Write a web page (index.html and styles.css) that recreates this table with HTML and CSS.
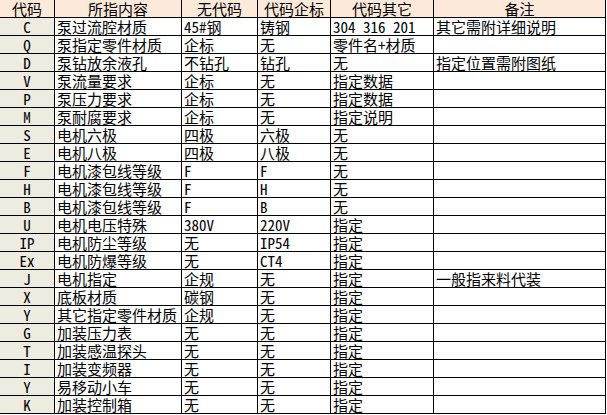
FILE: index.html
```html
<!DOCTYPE html>
<html lang="zh-CN">
<head>
<meta charset="utf-8">
<title>代码表</title>
<link rel="stylesheet" href="styles.css">
</head>
<body>
<table class="sheet">
<colgroup>
<col class="c-code"><col class="c-item"><col class="c-none"><col class="c-std"><col class="c-other"><col class="c-note">
</colgroup>
<thead>
<tr><th>代码</th><th>所指内容</th><th>无代码</th><th>代码企标</th><th>代码其它</th><th>备注</th></tr>
</thead>
<tbody>
<tr><td class="code">C</td><td>泵过流腔材质</td><td>45#钢</td><td>铸钢</td><td>304 316 201</td><td>其它需附详细说明</td></tr>
<tr><td class="code">Q</td><td>泵指定零件材质</td><td>企标</td><td>无</td><td>零件名+材质</td><td></td></tr>
<tr><td class="code">D</td><td>泵钻放余液孔</td><td>不钻孔</td><td>钻孔</td><td>无</td><td>指定位置需附图纸</td></tr>
<tr><td class="code">V</td><td>泵流量要求</td><td>企标</td><td>无</td><td>指定数据</td><td></td></tr>
<tr><td class="code">P</td><td>泵压力要求</td><td>企标</td><td>无</td><td>指定数据</td><td></td></tr>
<tr><td class="code">M</td><td>泵耐腐要求</td><td>企标</td><td>无</td><td>指定说明</td><td></td></tr>
<tr><td class="code">S</td><td>电机六极</td><td>四极</td><td>六极</td><td>无</td><td></td></tr>
<tr><td class="code">E</td><td>电机八极</td><td>四极</td><td>八极</td><td>无</td><td></td></tr>
<tr><td class="code">F</td><td>电机漆包线等级</td><td>F</td><td>F</td><td>无</td><td></td></tr>
<tr><td class="code">H</td><td>电机漆包线等级</td><td>F</td><td>H</td><td>无</td><td></td></tr>
<tr><td class="code">B</td><td>电机漆包线等级</td><td>F</td><td>B</td><td>无</td><td></td></tr>
<tr><td class="code">U</td><td>电机电压特殊</td><td>380V</td><td>220V</td><td>指定</td><td></td></tr>
<tr><td class="code">IP</td><td>电机防尘等级</td><td>无</td><td>IP54</td><td>指定</td><td></td></tr>
<tr><td class="code">Ex</td><td>电机防爆等级</td><td>无</td><td>CT4</td><td>指定</td><td></td></tr>
<tr><td class="code">J</td><td>电机指定</td><td>企规</td><td>无</td><td>指定</td><td>一般指来料代装</td></tr>
<tr><td class="code">X</td><td>底板材质</td><td>碳钢</td><td>无</td><td>指定</td><td></td></tr>
<tr><td class="code">Y</td><td>其它指定零件材质</td><td>企规</td><td>无</td><td>指定</td><td></td></tr>
<tr><td class="code">G</td><td>加装压力表</td><td>无</td><td>无</td><td>指定</td><td></td></tr>
<tr><td class="code">T</td><td>加装感温探头</td><td>无</td><td>无</td><td>指定</td><td></td></tr>
<tr><td class="code">I</td><td>加装变频器</td><td>无</td><td>无</td><td>指定</td><td></td></tr>
<tr><td class="code">Y</td><td>易移动小车</td><td>无</td><td>无</td><td>指定</td><td></td></tr>
<tr><td class="code">K</td><td>加装控制箱</td><td>无</td><td>无</td><td>指定</td><td></td></tr>
</tbody>
</table>
</body>
</html>
```
FILE: styles.css
```css
html, body {
  margin: 0;
  padding: 0;
  background: #ffffff;
}
body {
  overflow: hidden;
}
.sheet {
  margin: -1px 0 0 -1px;
  border-collapse: separate;
  border-spacing: 1px;
  background: #000000;
  table-layout: fixed;
  width: 607px;
  font-family: "Noto Sans Mono CJK SC", "Noto Sans CJK SC", sans-serif;
  font-size: 15px;
  color: #000000;
}
.c-code { width: 54px; }
.c-item { width: 126px; }
.c-none { width: 75px; }
.c-std { width: 72px; }
.c-other { width: 102px; }
.c-note { width: 171px; }
.sheet th,
.sheet td {
  height: 17px;
  padding: 0 0 0 2px;
  line-height: 17px;
  white-space: nowrap;
  overflow: hidden;
  background: #ffffff;
  text-align: left;
  font-weight: normal;
  vertical-align: bottom;
}
.sheet th {
  background: #fde9d9;
  text-align: center;
  padding: 0;
}
.sheet td.code {
  background: #eeece1;
  text-align: center;
  padding: 0;
}
```
